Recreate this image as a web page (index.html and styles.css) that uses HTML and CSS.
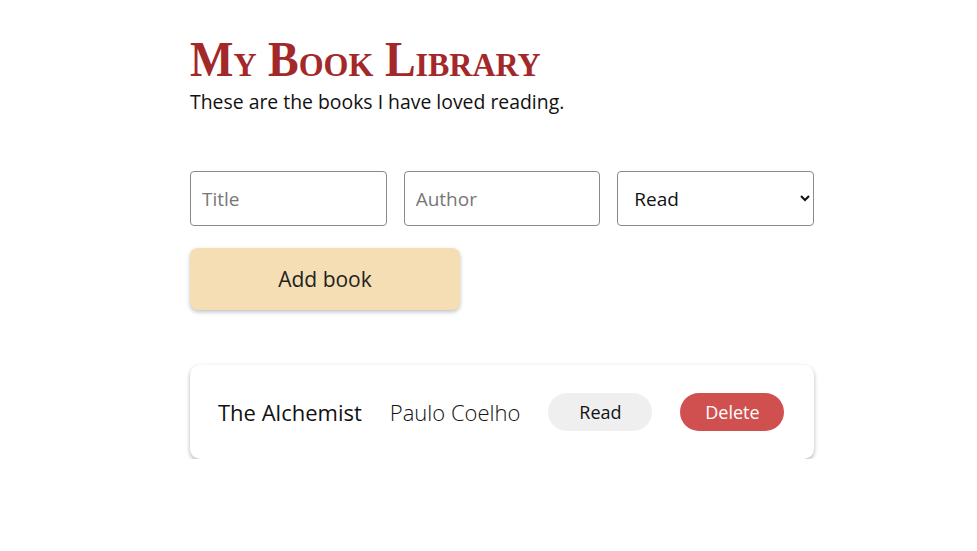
FILE: index.html
```
<!DOCTYPE html>
<html>
<head>
<meta charset="utf-8">
<link rel="stylesheet" href="styles.css">
</head>
<body>
<main class="app">
  <header class="header">
    <h1 class="title">My Book Library</h1>
    <p class="subtitle">These are the books I have loved reading.</p>
  </header>
  <form class="form">
    <div class="fields">
      <input class="field" type="text" placeholder="Title">
      <input class="field" type="text" placeholder="Author">
      <select class="field select">
        <option>Read</option>
        <option>Unread</option>
      </select>
    </div>
    <button class="add" type="button">Add book</button>
  </form>
  <ul class="books">
    <li class="book">
      <span class="book-title">The Alchemist</span>
      <span class="book-author">Paulo Coelho</span>
      <button class="pill status" type="button">Read</button>
      <button class="pill delete" type="button">Delete</button>
    </li>
  </ul>
</main>
</body>
</html>
```
FILE: styles.css
```
* { box-sizing: border-box; }
html, body { margin: 0; padding: 0; background: #fff; }
body {
  font-family: "Open Sans", "Noto Sans", sans-serif;
  color: #111;
}
.app {
  width: 624px;
  margin-left: 190px;
  padding-top: 35px;
}
.title {
  margin: 0;
  font-family: "Liberation Serif", "DejaVu Serif", serif;
  font-variant: small-caps;
  font-weight: 700;
  font-size: 46px;
  line-height: 54px;
  color: #a3282a;
  transform: scaleY(1.08);
  transform-origin: left bottom;
}
.subtitle {
  margin: 0;
  font-size: 19.4px;
  line-height: 26px;
  font-weight: 400;
}
.form { margin-top: 56px; }
.fields {
  display: grid;
  grid-template-columns: repeat(3, minmax(0, 1fr));
  gap: 17px;
}
.field {
  width: 100%;
  min-width: 0;
  height: 55px;
  border: 1px solid #8a8a8a;
  border-radius: 4px;
  padding: 0 11px;
  font-family: inherit;
  font-size: 19px;
  color: #111;
  background: #fff;
}
.field::placeholder { color: #777; }
.select { padding: 0 8px 0 12px; }
.add {
  margin-top: 22px;
  width: 270px;
  height: 62px;
  border: none;
  border-radius: 8px;
  background: #f5deb3;
  box-shadow: 0 2px 4px rgba(0,0,0,0.25);
  font-family: inherit;
  font-size: 21px;
  color: #222;
}
.books {
  list-style: none;
  margin: 55px 0 0;
  padding: 0;
}
.book {
  display: flex;
  align-items: center;
  gap: 28px;
  height: 94px;
  padding: 0 28px;
  border-radius: 10px;
  background: #fff;
  box-shadow: 0 2px 4px rgba(0,0,0,0.3);
}
.book-title, .book-author { font-size: 22px; }
.book-author { font-weight: 300; }
.pill {
  width: 104px;
  height: 38px;
  border: none;
  border-radius: 19px;
  font-family: inherit;
  font-size: 18px;
}
.status { background: #efefef; color: #111; }
.delete { background: #d05050; color: #fff; }
```
